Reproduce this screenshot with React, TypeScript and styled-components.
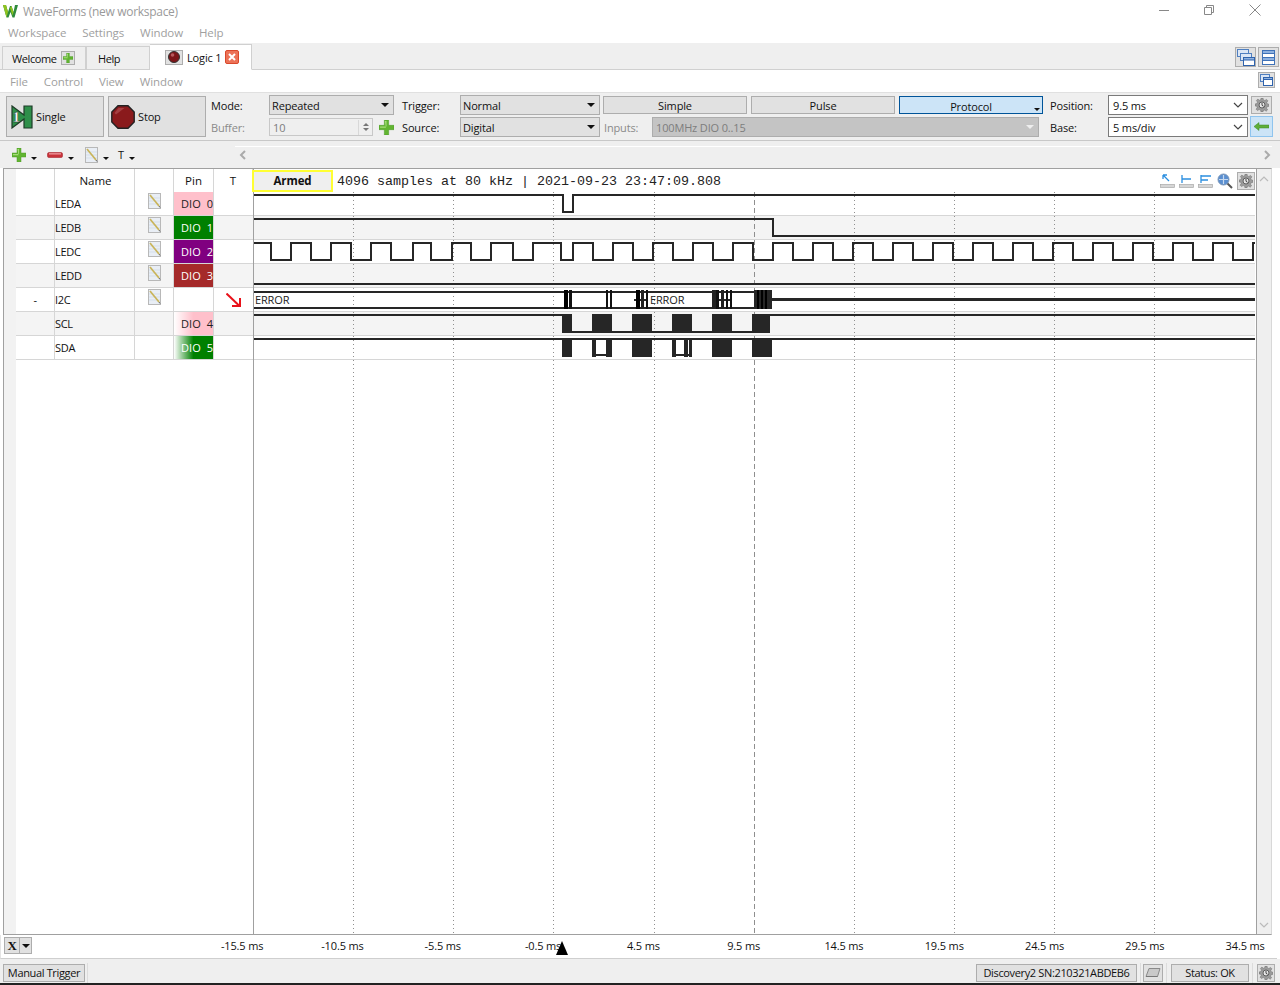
import { FC, ReactNode } from 'react';
import styled, { createGlobalStyle } from 'styled-components';

const GlobalStyle = createGlobalStyle`
  html, body {
    margin: 0;
    padding: 0;
    background: #fff;
  }
  * {
    box-sizing: border-box;
  }
`;

const FONT = '"Open Sans", "Noto Sans", sans-serif';

const Page = styled.div`
  width: 1280px;
  height: 985px;
  overflow: hidden;
  display: flex;
  flex-direction: column;
  background: #fff;
  font-family: ${FONT};
  font-size: 11px;
  letter-spacing: -0.15px;
  color: #111;
`;

const TitleBar = styled.div`
  height: 22px;
  flex: none;
  display: flex;
  align-items: center;
  padding-left: 3px;
  font-size: 12px;
  letter-spacing: -0.3px;
  color: #9a9a9a;
`;

const TitleText = styled.span`
  margin-left: 5px;
`;

const WindowButtons = styled.div`
  margin-left: auto;
  display: flex;
  align-items: center;
  gap: 35px;
  padding: 0 19px 2px 0;
`;

const Menu = styled.div<{ $h: number; $pl: number }>`
  height: ${(p) => p.$h}px;
  flex: none;
  display: flex;
  align-items: center;
  gap: 16px;
  padding-left: ${(p) => p.$pl}px;
  font-size: 11.5px;
  letter-spacing: -0.1px;
  color: #a0a0a0;
  background: #fff;
  position: relative;
`;

const TabStrip = styled.div`
  height: 27px;
  flex: none;
  display: flex;
  align-items: flex-end;
  padding-left: 2px;
  background: #efefef;
  border-bottom: 1px solid #d0d0d0;
`;

const Tab = styled.div<{ $w: number; $pl: number; $active?: boolean }>`
  width: ${(p) => p.$w}px;
  height: ${(p) => (p.$active ? 26 : 24)}px;
  margin-bottom: -1px;
  display: flex;
  align-items: center;
  padding-left: ${(p) => p.$pl}px;
  gap: 4px;
  letter-spacing: ${(p) => (p.$active ? -0.15 : -0.4)}px;
  color: #111;
  background: ${(p) => (p.$active ? '#fff' : '#efefef')};
  border: 1px solid #d0d0d0;
  border-bottom: ${(p) => (p.$active ? '1px solid #fff' : '1px solid #d0d0d0')};
  border-left-width: ${(p) => (p.$active ? 0 : 1)}px;
`;

const TabTools = styled.div`
  margin-left: auto;
  display: flex;
  gap: 2px;
  padding: 0 1px 2px 0;
  align-self: flex-end;
`;

const FrameButton = styled.div<{ $w: number; $h: number; $bg?: string; $border?: string }>`
  width: ${(p) => p.$w}px;
  height: ${(p) => p.$h}px;
  flex: none;
  display: flex;
  align-items: center;
  justify-content: center;
  background: ${(p) => p.$bg ?? '#e1e1e1'};
  border: 1px solid ${(p) => p.$border ?? '#adadad'};
`;

const MenuTool = styled.div`
  position: absolute;
  right: 5px;
  top: 2px;
`;

const Controls = styled.div`
  height: 49px;
  flex: none;
  display: flex;
  padding: 2px 0 0 6px;
  background: #efefef;
  border-top: 1px solid #e0e0e0;
  border-bottom: 1px solid #c8c8c8;
`;

const BigButton = styled.div<{ $pl: number }>`
  width: 98px;
  height: 41px;
  margin: 1px 4px 0 0;
  flex: none;
  display: flex;
  align-items: center;
  padding-left: ${(p) => p.$pl}px;
  gap: 3px;
  background: #e1e1e1;
  border: 1px solid #adadad;
`;

const FieldGroup = styled.div<{ $first: number; $second: number; $mr: number; $ml?: number }>`
  margin-left: ${(p) => p.$ml ?? 0}px;
  margin-right: ${(p) => p.$mr}px;
  display: grid;
  grid-template-columns: ${(p) => p.$first}px ${(p) => p.$second}px;
  grid-auto-rows: 20px;
  row-gap: 2px;
  align-items: center;
  flex: none;
`;

const Label = styled.span<{ $muted?: boolean }>`
  color: ${(p) => (p.$muted ? '#8a8a8a' : '#111')};
`;

const Select = styled.div<{ $tone: 'flat' | 'white' | 'disabled' }>`
  height: 20px;
  flex: 1;
  display: flex;
  align-items: center;
  justify-content: space-between;
  padding: 0 4px 0 ${(p) => (p.$tone === 'flat' ? 2 : p.$tone === 'white' ? 4 : 3)}px;
  color: ${(p) => (p.$tone === 'disabled' ? '#7d7d7d' : '#111')};
  background: ${(p) => (p.$tone === 'white' ? '#fff' : p.$tone === 'disabled' ? '#c4c4c4' : '#e1e1e1')};
  border: 1px solid ${(p) => (p.$tone === 'white' ? '#7a7a7a' : '#adadad')};
`;

const InputsSelect = styled(Select)`
  flex: none;
  width: 387px;
  margin-left: -4px;
`;

const Caret = styled.i<{ $color?: string }>`
  width: 0;
  height: 0;
  flex: none;
  border-left: 4px solid transparent;
  border-right: 4px solid transparent;
  border-top: 4px solid ${(p) => p.$color ?? '#111'};
`;

const BufferRow = styled.div`
  display: flex;
  align-items: center;
  gap: 6px;
`;

const BufferInput = styled.div`
  width: 104px;
  height: 18px;
  display: flex;
  align-items: center;
  justify-content: space-between;
  padding: 1px 0 0 3px;
  color: #7d7d7d;
  background: #efefef;
  border: 1px solid #c8c8c8;
`;

const Spinner = styled.span`
  width: 14px;
  height: 100%;
  margin-top: -1px;
  display: flex;
  flex-direction: column;
  align-items: center;
  justify-content: center;
  gap: 2px;
  border-left: 1px solid #d8d8d8;
`;

const SpinTip = styled.i<{ $up?: boolean }>`
  width: 0;
  height: 0;
  border-left: 3px solid transparent;
  border-right: 3px solid transparent;
  ${(p) => (p.$up ? 'border-bottom: 3px solid #777;' : 'border-top: 3px solid #777;')}
`;

const TypeGroup = styled.div`
  width: 443px;
  margin-right: 4px;
  flex: none;
  display: flex;
  flex-direction: column;
  gap: 2px;
`;

const TypeRow = styled.div`
  height: 20px;
  display: flex;
  align-items: center;
  gap: 4px;
`;

const TypeButton = styled.div<{ $active?: boolean }>`
  width: 144px;
  height: 18px;
  flex: none;
  position: relative;
  display: flex;
  align-items: center;
  justify-content: center;
  padding-top: ${(p) => (p.$active ? 2 : 0)}px;
  background: ${(p) => (p.$active ? '#cce4f7' : '#e1e1e1')};
  border: 1px solid ${(p) => (p.$active ? '#005499' : '#adadad')};
`;

const CornerCaret = styled.i`
  position: absolute;
  right: 2px;
  bottom: 2px;
  width: 0;
  height: 0;
  border-left: 3px solid transparent;
  border-right: 3px solid transparent;
  border-top: 3px solid #111;
`;

const InputsLabel = styled(Label)`
  width: 48px;
  flex: none;
  margin-left: 1px;
`;

const SideTools = styled.div`
  margin: 1px 0 0 2px;
  display: flex;
  flex-direction: column;
  gap: 2px;
  align-items: center;
`;

const Toolbar = styled.div`
  height: 27px;
  flex: none;
  display: flex;
  align-items: center;
  padding-left: 12px;
  background: #efefef;
`;

const ToolItem = styled.div<{ $w: number }>`
  width: ${(p) => p.$w}px;
  height: 100%;
  flex: none;
  display: flex;
  align-items: center;
`;

const DropTip = styled.i`
  width: 0;
  height: 0;
  margin: 8px 0 0 5px;
  border-left: 3px solid transparent;
  border-right: 3px solid transparent;
  border-top: 3px solid #111;
`;

const TabScroller = styled.div`
  flex: 1;
  height: 22px;
  margin: 5px 8px 0 99px;
  padding: 0 0 5px 4px;
  display: flex;
  align-items: center;
  justify-content: space-between;
  border-top: 1px solid #fff;
`;

const PlotPanel = styled.div`
  flex: 1;
  min-height: 0;
  margin: 0 8px 0 3px;
  display: flex;
  background: #fff;
  border: 1px solid #a0a0a0;
  border-right: 1px solid #d8d8d8;
`;

const Gutter = styled.div`
  width: 12px;
  flex: none;
  background: #f2f2f2;
`;

const ChannelTable = styled.div`
  width: 237px;
  flex: none;
  display: grid;
  grid-template-columns: 39px 80px 39px 40px 39px;
  grid-template-rows: 23px;
  grid-auto-rows: 24px;
  align-content: start;
`;

const HeaderCell = styled.div<{ $pl?: number }>`
  display: flex;
  align-items: center;
  justify-content: center;
  font-size: 11.5px;
  letter-spacing: 0;
  border-right: 1px solid #d6d6d6;
  padding-left: ${(p) => p.$pl ?? 0}px;
`;

const Cell = styled.div<{ $alt: boolean; $last?: boolean }>`
  height: 24px;
  display: flex;
  align-items: center;
  letter-spacing: -0.3px;
  background: ${(p) => (p.$alt ? '#f4f4f4' : '#fff')};
  border-bottom: 1px solid #d6d6d6;
  border-right: ${(p) => (p.$last ? 0 : 1)}px solid #d6d6d6;
`;

const CenterCell = styled(Cell)`
  justify-content: center;
`;

const NoteCell = styled(Cell)`
  justify-content: center;
  align-items: flex-start;
  padding-top: 1px;
`;

const PinCell = styled.div<{ $bg: string; $fg: string }>`
  height: 24px;
  display: flex;
  align-items: center;
  padding-left: 7px;
  white-space: pre;
  letter-spacing: 0.1px;
  color: ${(p) => p.$fg};
  background: ${(p) => p.$bg};
  border-bottom: 1px solid #d6d6d6;
  border-right: 1px solid #d6d6d6;
`;

const WaveColumn = styled.div`
  flex: 1;
  min-width: 0;
  display: flex;
  flex-direction: column;
  border-left: 1px solid #a0a0a0;
`;

const WaveHeader = styled.div`
  height: 23px;
  flex: none;
  display: flex;
  align-items: center;
`;

const ArmedBox = styled.div`
  width: 81px;
  height: 22px;
  margin-left: -2px;
  flex: none;
  display: flex;
  align-items: center;
  justify-content: center;
  font-size: 11.5px;
  font-weight: 700;
  letter-spacing: -0.1px;
  background: #efefef;
  border: 2px solid #ffff33;
`;

const SampleInfo = styled.span`
  margin: 1px 0 0 4px;
  font-family: "Liberation Mono", monospace;
  font-size: 13.33px;
  letter-spacing: 0;
  white-space: pre;
  color: #222;
`;

const HeaderTools = styled.div`
  margin-left: auto;
  margin-right: 1px;
  display: flex;
  align-items: center;
  gap: 4px;
`;

const ChartSvg = styled.svg`
  display: block;
  flex: none;
`;

const ScrollColumn = styled.div`
  width: 15px;
  flex: none;
  display: flex;
  flex-direction: column;
  align-items: center;
  justify-content: space-between;
  padding: 5px 0 4px;
  background: #efefef;
  border-left: 1px solid #a0a0a0;
`;

const AxisBar = styled.div`
  height: 24px;
  flex: none;
  position: relative;
  display: flex;
  align-items: center;
  padding: 0 0 2px 3px;
  margin-right: 3px;
  background: #fff;
  border-bottom: 1px solid #cfcfcf;
  border-left: 1px solid #e4e4e4;
`;

const AxisSelect = styled.div`
  width: 28px;
  height: 17px;
  margin-right: 160px;
  flex: none;
  display: flex;
  align-items: center;
  background: #e1e1e1;
  border: 1px solid #adadad;
  font-family: "Liberation Serif", serif;
  font-weight: 700;
  font-size: 13px;
`;

const AxisLetter = styled.span`
  width: 15px;
  text-align: center;
  border-right: 1px solid #adadad;
  line-height: 15px;
`;

const AxisCaretSlot = styled.span`
  flex: 1;
  display: flex;
  justify-content: center;
`;

const AxisLabel = styled.span`
  width: 100.3px;
  flex: none;
  text-align: center;
  white-space: nowrap;
`;

const TimeMarker = styled.i`
  position: absolute;
  left: 555px;
  top: 6px;
  width: 0;
  height: 0;
  border-left: 6.5px solid transparent;
  border-right: 6.5px solid transparent;
  border-bottom: 14px solid #000;
`;

const StatusBar = styled.div`
  height: 26px;
  flex: none;
  display: flex;
  align-items: flex-start;
  padding: 5px 5px 0 3px;
  background: #efefef;
  border-bottom: 2px solid #222;
`;

const StatusBox = styled.div<{ $w: number }>`
  width: ${(p) => p.$w}px;
  height: 18px;
  flex: none;
  display: flex;
  align-items: center;
  justify-content: center;
  padding-bottom: 1px;
  white-space: nowrap;
  letter-spacing: -0.35px;
  background: #e1e1e1;
  border: 1px solid #adadad;
`;

const StatusSep = styled.i<{ $ml: number; $mr: number }>`
  width: 1px;
  height: 20px;
  margin: -1px ${(p) => p.$mr}px 0 ${(p) => p.$ml}px;
  flex: none;
  background: #dcdcdc;
`;

const StatusSpacer = styled.div`
  flex: 1;
`;

const Logo: FC = () => (
  <svg width="15" height="13" viewBox="0 0 15 13">
    <path d="M0 0h3l2 7 2-6h1.500l2 6 1.500-7h3l-3.500 12.500h-2L7.500 7l-2 5.500h-2z" fill="#2f8a3c" />
    <path d="M0 0h3l2 7-1.500 5.500zM8.500 1l2 6-1 3.500L7 3z" fill="#8fc31f" />
  </svg>
);

const Plus: FC<{ size?: number }> = ({ size = 14 }) => (
  <svg width={size} height={size} viewBox="0 0 14 14">
    <path d="M5 0h4v5h5v4H9v5H5V9H0V5h5z" fill="#62b531" stroke="#4c9a2a" strokeWidth="0.5" />
    <path d="M5.500 1h1.500v5H1v1.200h5.500z" fill="#a6dd7a" />
  </svg>
);

const Minus: FC = () => (
  <svg width="16" height="6" viewBox="0 0 16 6">
    <rect x="0.500" y="0.500" width="15" height="5" rx="1.500" fill="#c9323a" stroke="#a82830" strokeWidth="0.600" />
    <rect x="2" y="1.200" width="12" height="1.300" fill="#ee9a9e" />
  </svg>
);

const Note: FC = () => (
  <svg width="13" height="16" viewBox="0 0 13 16">
    <rect x="0.500" y="0.500" width="12" height="15" fill="#e9eef5" stroke="#b8b8b8" />
    <path d="M1 5h11M1 8h11M1 11h11" stroke="#cfd9e6" strokeWidth="0.700" />
    <path d="M2 2l9 11" stroke="#c9b45a" strokeWidth="1.700" />
    <path d="M11 13l1 1.500" stroke="#666" strokeWidth="1" />
  </svg>
);

const Gear: FC<{ size?: number }> = ({ size = 14 }) => (
  <svg width={size} height={size} viewBox="0 0 14 14">
    <path
      d="M6 0h2l.4 1.900 1.500.6 1.600-1.100 1.400 1.400-1.100 1.600.6 1.500 1.600.4v2l-1.900.4-.6 1.500 1.100 1.600-1.400 1.400-1.600-1.100-1.500.6L8 14H6l-.4-1.900-1.500-.6-1.600 1.100-1.400-1.400 1.100-1.600-.6-1.500L0 8V6l1.900-.4.6-1.500L1.400 2.500 2.800 1.100l1.600 1.100 1.500-.6z"
      fill="#9b9b9b"
      stroke="#6d6d6d"
      strokeWidth="0.500"
    />
    <circle cx="7" cy="7" r="3" fill="#e8e8e8" stroke="#5f5f5f" />
    <path d="M7 5v2.300l1.600 1" stroke="#444" fill="none" />
  </svg>
);

const Windows: FC<{ stacked?: boolean }> = ({ stacked }) =>
  stacked ? (
    <svg width="18" height="17" viewBox="0 0 18 17">
      <rect x="0.500" y="0.500" width="11" height="7" fill="#dbe6f5" stroke="#4f7fc0" />
      <rect x="3.500" y="4.500" width="11" height="7" fill="#dbe6f5" stroke="#4f7fc0" />
      <rect x="6.500" y="8.500" width="11" height="8" fill="#fff" stroke="#2f63ad" />
      <rect x="6.500" y="8.500" width="11" height="2.500" fill="#8fb2e0" stroke="#2f63ad" />
    </svg>
  ) : (
    <svg width="13" height="15" viewBox="0 0 13 15">
      <rect x="0.500" y="0.500" width="12" height="14" fill="#fff" stroke="#3f72b8" />
      <rect x="0.500" y="0.500" width="12" height="3" fill="#8fb2e0" stroke="#3f72b8" />
      <rect x="0.500" y="7.500" width="12" height="3" fill="#8fb2e0" stroke="#3f72b8" />
    </svg>
  );

const SingleIcon: FC = () => (
  <svg width="22" height="24" viewBox="0 0 22 24">
    <path d="M1 1l12 9V1h8v22h-8v-9L1 23z" fill="#2f8f4a" stroke="#1f3b28" strokeWidth="1.200" />
    <text x="1.500" y="17" fontFamily="Liberation Serif, serif" fontWeight="700" fontSize="15" fill="#fff" stroke="#222" strokeWidth="0.300">
      1
    </text>
  </svg>
);

const StopIcon: FC<{ size: number }> = ({ size }) => (
  <svg width={size} height={size} viewBox="0 0 24 24">
    <path d="M7 .8h10L23.200 7v10L17 23.200H7L.8 17V7z" fill="#8a1a1c" stroke="#222" strokeWidth="1.400" />
    <path d="M7.500 3h6L5 9.500 3.500 8z" fill="#b8595c" opacity="0.600" />
  </svg>
);

const RunDot: FC = () => (
  <svg width="12" height="12" viewBox="0 0 12 12">
    <circle cx="6" cy="6" r="5.500" fill="#7d1518" stroke="#333" />
    <circle cx="4.500" cy="4" r="1.800" fill="#b8595c" />
  </svg>
);

const CloseIcon: FC = () => (
  <svg width="14" height="14" viewBox="0 0 14 14">
    <rect x="0.500" y="0.500" width="13" height="13" rx="1.500" fill="#ec7257" stroke="#d9482b" />
    <path d="M4 4l6 6M10 4l-6 6" stroke="#fff" strokeWidth="2" />
  </svg>
);

const BackArrow: FC = () => (
  <svg width="15" height="9" viewBox="0 0 15 9">
    <path d="M0 4.500L5 .5v2.500h10v3H5v2.500z" fill="#5fae3a" stroke="#3b8a2a" strokeWidth="0.500" />
  </svg>
);

const Chevron: FC<{ dir: 'left' | 'right' | 'up' | 'down'; color?: string }> = ({ dir, color = '#666' }) => {
  const d = {
    left: 'M6 1L2 5l4 4',
    right: 'M3 1l4 4-4 4',
    up: 'M1 7l4-4 4 4',
    down: 'M1 3l4 4 4-4',
  }[dir];
  return (
    <svg width="10" height="10" viewBox="0 0 10 10">
      <path d={d} fill="none" stroke={color} strokeWidth={dir === 'down' || dir === 'up' ? 1.200 : 2} />
    </svg>
  );
};

const RulerTool: FC<{ d: string }> = ({ d }) => (
  <svg width="15" height="14" viewBox="0 0 15 14">
    <path d={d} fill="none" stroke="#2b8fe0" strokeWidth="1.300" />
    <rect x="0.500" y="10.500" width="14" height="3" fill="#d6d6d6" stroke="#a8a8a8" strokeWidth="0.700" />
  </svg>
);

const Magnifier: FC = () => (
  <svg width="16" height="16" viewBox="0 0 16 16">
    <path d="M10 10l5 5" stroke="#555" strokeWidth="2" />
    <circle cx="6.500" cy="6.500" r="5.500" fill="#5b8fd0" stroke="#7b96b8" />
    <path d="M6.500 2v9M2 6.500h9" stroke="#c7d9ef" strokeWidth="1.200" />
  </svg>
);

const DeviceIcon: FC = () => (
  <svg width="16" height="10" viewBox="0 0 16 10">
    <path d="M4 .5h11l-2.500 8H1z" fill="#c9c9c9" stroke="#8a8a8a" />
    <path d="M1 8.500h11.500" stroke="#777" />
  </svg>
);

const TriggerArrow: FC = () => (
  <svg width="15" height="14" viewBox="0 0 15 14">
    <path d="M0.500 0.500L13 12.500" stroke="#e8121a" strokeWidth="2" />
    <path d="M6 13h8V5" fill="none" stroke="#e8121a" strokeWidth="2" />
  </svg>
);

type Channel = {
  name: string;
  dash?: string;
  note?: boolean;
  pin?: string;
  pinBg?: string;
  pinFg?: string;
  trigger?: boolean;
};

const channels: Channel[] = [
  { name: 'LEDA', note: true, pin: 'DIO  0', pinBg: '#ffc0cb', pinFg: '#222' },
  { name: 'LEDB', note: true, pin: 'DIO  1', pinBg: '#008000', pinFg: '#fff' },
  { name: 'LEDC', note: true, pin: 'DIO  2', pinBg: '#800080', pinFg: '#fff' },
  { name: 'LEDD', note: true, pin: 'DIO  3', pinBg: '#a52a2a', pinFg: '#fff' },
  { name: 'I2C', dash: '-', note: true, trigger: true },
  { name: 'SCL', pin: 'DIO  4', pinBg: 'linear-gradient(90deg, #fff 0%, #ffc0cb 50%)', pinFg: '#222' },
  { name: 'SDA', pin: 'DIO  5', pinBg: 'linear-gradient(90deg, #fff 0%, #008000 50%)', pinFg: '#fff' },
];

const axisLabels = ['-15.5', '-10.5', '-5.5', '-0.5', '4.5', '9.5', '14.5', '19.5', '24.5', '29.5', '34.5'];

const LEFT = 254;
const RIGHT = 1255;

// path for a digital line toggling at the given edges
const wave = (hi: number, lo: number, edges: number[], startHigh = true): string => {
  let high = startHigh;
  let d = `M${LEFT} ${high ? hi : lo}`;
  edges.forEach((x) => {
    high = !high;
    d += `H${x}V${high ? hi : lo}`;
  });
  return `${d}H${RIGHT}`;
};

const ledcEdges = [
  271, 291, 311, 331, 351, 371, 391, 413, 431, 452, 471, 491, 513, 533, 561, 573, 593, 613, 633, 653, 673, 693, 713,
  733, 753, 773, 793, 813, 833, 853, 873, 893, 913, 933, 953, 973, 993, 1013, 1033, 1053, 1073, 1093, 1113, 1133, 1153,
  1173, 1193, 1213, 1233, 1253,
];

const busBars: [number, number, string][] = [
  [564, 4, '#000'],
  [569, 3, '#111'],
  [606, 2, '#111'],
  [610, 2, '#111'],
  [636, 4, '#000'],
  [641, 3, '#222'],
  [646, 2, '#111'],
  [712, 4, '#222'],
  [716, 3, '#111'],
  [721, 3, '#222'],
  [726, 2, '#111'],
  [730, 2, '#111'],
  [754, 18, '#262626'],
  [757, 2, '#000'],
  [761, 2, '#000'],
  [765, 2, '#000'],
];

const sclBlocks = [
  [562, 10],
  [592, 20],
  [632, 20],
  [672, 20],
  [712, 20],
  [752, 18],
];

const sdaBlocks = [
  [562, 10],
  [592, 4],
  [606, 6],
  [632, 20],
  [672, 4],
  [684, 4],
  [689, 3],
  [712, 20],
  [752, 20],
];

const WaveChart: FC = () => (
  <ChartSvg width="1001" height="742" viewBox="254 192 1001 742" shapeRendering="crispEdges">
    {channels.map((c, i) => (
      <g key={c.name}>
        <rect x={LEFT} y={192 + i * 24} width={1001} height={23} fill={i % 2 ? '#f4f4f4' : '#fff'} />
        <rect x={LEFT} y={215 + i * 24} width={1001} height={1} fill="#d6d6d6" />
      </g>
    ))}
    {[353, 453, 553, 654, 854, 954, 1054, 1154].map((x) => (
      <path key={x} d={`M${x + 0.5} 192V935`} stroke="#8f8f8f" strokeDasharray="1 3" />
    ))}
    <path d="M754.500 192V935" stroke="#8f8f8f" strokeDasharray="5 3" />
    <g fill="none" stroke="#262626" strokeWidth="2">
      <path d={wave(195, 212, [563, 573])} />
      <path d={wave(219, 236, [773])} />
      <path d={wave(243, 260, ledcEdges)} />
      <path d={`M${LEFT} 284H${RIGHT}`} />
      <path d={`M${LEFT} 291.500H772M${LEFT} 308H772`} />
      <path d="M772 299.500H1255" strokeWidth="3" />
      <path d="M634 299.500H648M712 299.500H732" />
      <path d="M254 315H562M562 332H770M770 315H1255" />
      <path d="M254 339H1255M592 355H612M672 355H692" />
    </g>
    {busBars.map(([x, w, fill]) => (
      <rect key={`${x}-${fill}`} x={x} y={290} width={w} height={19} fill={fill} />
    ))}
    {sclBlocks.map(([x, w]) => (
      <rect key={x} x={x} y={314} width={w} height={19} fill="#262626" />
    ))}
    {sdaBlocks.map(([x, w]) => (
      <rect key={x} x={x} y={338} width={w} height={19} fill="#262626" />
    ))}
    <g fontFamily={FONT} fontSize="11" fill="#222" shapeRendering="auto">
      <text x="255" y="304">
        ERROR
      </text>
      <text x="650" y="304">
        ERROR
      </text>
    </g>
  </ChartSvg>
);

const ToolFrame: FC<{ children: ReactNode }> = ({ children }) => (
  <FrameButton $w={18} $h={18}>
    {children}
  </FrameButton>
);

const App: FC = () => (
  <Page>
    <GlobalStyle />
    <TitleBar>
      <Logo />
      <TitleText>WaveForms (new workspace)</TitleText>
      <WindowButtons>
        <svg width="10" height="1" viewBox="0 0 10 1">
          <rect width="10" height="1" fill="#888" />
        </svg>
        <svg width="10" height="10" viewBox="0 0 10 10">
          <path d="M2.500 2.500V.5h7v7H7.500M.5 2.500h7v7h-7z" fill="none" stroke="#888" />
        </svg>
        <svg width="12" height="12" viewBox="0 0 12 12">
          <path d="M.5.5l11 11M11.500.5l-11 11" stroke="#888" />
        </svg>
      </WindowButtons>
    </TitleBar>
    <Menu $h={21} $pl={8}>
      <span>Workspace</span>
      <span>Settings</span>
      <span>Window</span>
      <span>Help</span>
    </Menu>
    <TabStrip>
      <Tab $w={84} $pl={9}>
        Welcome
        <FrameButton $w={14} $h={14}>
          <Plus size={10} />
        </FrameButton>
      </Tab>
      <Tab $w={64} $pl={11}>
        Help
      </Tab>
      <Tab $w={102} $pl={15} $active>
        <FrameButton $w={18} $h={15}>
          <RunDot />
        </FrameButton>
        Logic 1
        <CloseIcon />
      </Tab>
      <TabTools>
        <FrameButton $w={21} $h={20}>
          <Windows stacked />
        </FrameButton>
        <FrameButton $w={21} $h={20}>
          <Windows />
        </FrameButton>
      </TabTools>
    </TabStrip>
    <Menu $h={22} $pl={10}>
      <span>File</span>
      <span>Control</span>
      <span>View</span>
      <span>Window</span>
      <MenuTool>
        <FrameButton $w={17} $h={16}>
          <svg width="13" height="12" viewBox="0 0 13 12">
            <rect x="0.500" y="0.500" width="9" height="7" fill="#dbe6f5" stroke="#4f7fc0" />
            <rect x="3.500" y="3.500" width="9" height="8" fill="#fff" stroke="#2f63ad" />
            <rect x="3.500" y="3.500" width="9" height="2" fill="#8fb2e0" stroke="#2f63ad" />
          </svg>
        </FrameButton>
      </MenuTool>
    </Menu>
    <Controls>
      <BigButton $pl={4}>
        <SingleIcon />
        Single
      </BigButton>
      <BigButton $pl={2}>
        <StopIcon size={24} />
        Stop
      </BigButton>
      <FieldGroup $first={58} $second={125} $mr={8} $ml={1}>
        <Label>Mode:</Label>
        <Select $tone="flat">
          Repeated
          <Caret />
        </Select>
        <Label $muted>Buffer:</Label>
        <BufferRow>
          <BufferInput>
            10
            <Spinner>
              <SpinTip $up />
              <SpinTip />
            </Spinner>
          </BufferInput>
          <Plus size={15} />
        </BufferRow>
      </FieldGroup>
      <FieldGroup $first={58} $second={140} $mr={3}>
        <Label>Trigger:</Label>
        <Select $tone="flat">
          Normal
          <Caret />
        </Select>
        <Label>Source:</Label>
        <Select $tone="flat">
          Digital
          <Caret />
        </Select>
      </FieldGroup>
      <TypeGroup>
        <TypeRow>
          <TypeButton>Simple</TypeButton>
          <TypeButton>Pulse</TypeButton>
          <TypeButton $active>
            Protocol
            <CornerCaret />
          </TypeButton>
        </TypeRow>
        <TypeRow>
          <InputsLabel $muted>Inputs:</InputsLabel>
          <InputsSelect $tone="disabled">
            100MHz DIO 0..15
            <Caret $color="#eee" />
          </InputsSelect>
        </TypeRow>
      </TypeGroup>
      <FieldGroup $first={58} $second={140} $mr={0}>
        <Label>Position:</Label>
        <Select $tone="white">
          9.5 ms
          <Chevron dir="down" color="#444" />
        </Select>
        <Label>Base:</Label>
        <Select $tone="white">
          5 ms/div
          <Chevron dir="down" color="#444" />
        </Select>
      </FieldGroup>
      <SideTools>
        <FrameButton $w={21} $h={18}>
          <Gear />
        </FrameButton>
        <FrameButton $w={23} $h={21} $bg="#cce4f7" $border="#8fc4ee">
          <BackArrow />
        </FrameButton>
      </SideTools>
    </Controls>
    <Toolbar>
      <ToolItem $w={35}>
        <Plus />
        <DropTip />
      </ToolItem>
      <ToolItem $w={38}>
        <Minus />
        <DropTip />
      </ToolItem>
      <ToolItem $w={33}>
        <Note />
        <DropTip />
      </ToolItem>
      <ToolItem $w={18}>
        T
        <DropTip />
      </ToolItem>
      <TabScroller>
        <Chevron dir="left" color="#aaa" />
        <Chevron dir="right" color="#aaa" />
      </TabScroller>
    </Toolbar>
    <PlotPanel>
      <Gutter />
      <ChannelTable>
        <HeaderCell />
        <HeaderCell $pl={2}>Name</HeaderCell>
        <HeaderCell />
        <HeaderCell>Pin</HeaderCell>
        <HeaderCell>T</HeaderCell>
        {channels.map((c, i) => {
          const alt = i % 2 === 1;
          return [
            <CenterCell key={`${c.name}-dash`} $alt={alt}>
              {c.dash}
            </CenterCell>,
            <Cell key={`${c.name}-name`} $alt={alt}>
              {c.name}
            </Cell>,
            <NoteCell key={`${c.name}-note`} $alt={alt}>
              {c.note && <Note />}
            </NoteCell>,
            c.pin ? (
              <PinCell key={`${c.name}-pin`} $bg={c.pinBg ?? '#fff'} $fg={c.pinFg ?? '#222'}>
                {c.pin}
              </PinCell>
            ) : (
              <Cell key={`${c.name}-pin`} $alt={alt} />
            ),
            <CenterCell key={`${c.name}-trig`} $alt={alt} $last>
              {c.trigger && <TriggerArrow />}
            </CenterCell>,
          ];
        })}
      </ChannelTable>
      <WaveColumn>
        <WaveHeader>
          <ArmedBox>Armed</ArmedBox>
          <SampleInfo>4096 samples at 80 kHz | 2021-09-23 23:47:09.808</SampleInfo>
          <HeaderTools>
            <RulerTool d="M3 1l6 6M3 1h4M3 1v4" />
            <RulerTool d="M3 1v8M3 5h9" />
            <RulerTool d="M3 1v8M3 2h10M3 6h7" />
            <Magnifier />
            <ToolFrame>
              <Gear />
            </ToolFrame>
          </HeaderTools>
        </WaveHeader>
        <WaveChart />
      </WaveColumn>
      <ScrollColumn>
        <Chevron dir="up" color="#bbb" />
        <Chevron dir="down" color="#bbb" />
      </ScrollColumn>
    </PlotPanel>
    <AxisBar>
      <AxisSelect>
        <AxisLetter>X</AxisLetter>
        <AxisCaretSlot>
          <Caret />
        </AxisCaretSlot>
      </AxisSelect>
      {axisLabels.map((t) => (
        <AxisLabel key={t}>{t} ms</AxisLabel>
      ))}
      <TimeMarker />
    </AxisBar>
    <StatusBar>
      <StatusBox $w={82}>Manual Trigger</StatusBox>
      <StatusSep $ml={2} $mr={2} />
      <StatusSpacer />
      <StatusBox $w={161}>Discovery2 SN:210321ABDEB6</StatusBox>
      <StatusSep $ml={3} $mr={2} />
      <StatusBox $w={20}>
        <DeviceIcon />
      </StatusBox>
      <StatusSep $ml={3} $mr={4} />
      <StatusBox $w={78}>Status: OK</StatusBox>
      <StatusSep $ml={3} $mr={4} />
      <StatusBox $w={18}>
        <Gear />
      </StatusBox>
    </StatusBar>
  </Page>
);

export default App;
